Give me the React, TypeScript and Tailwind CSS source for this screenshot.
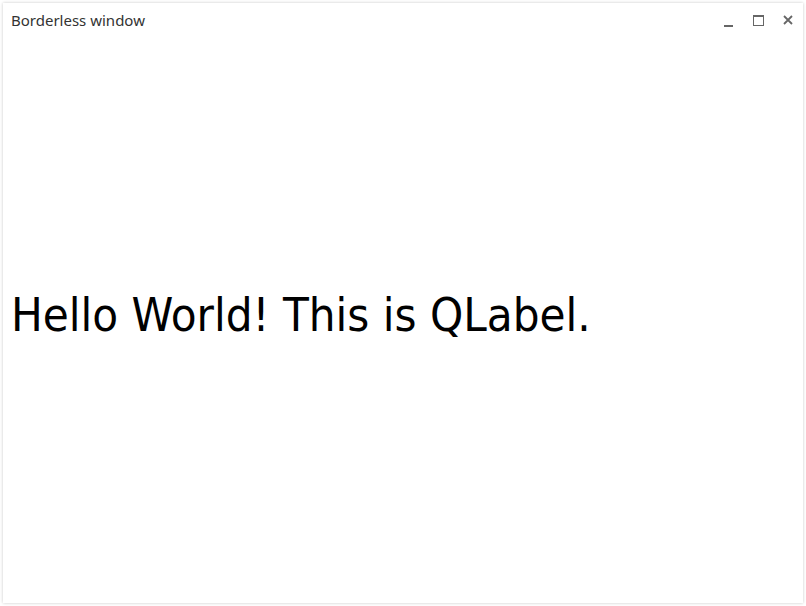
export default function App() {
  return (
    <div className="w-[806px] h-[606px] bg-white p-[3px]">
      <div className="flex h-full flex-col bg-white shadow-[0_0_3px_rgba(0,0,0,0.22)]">
        <div className="flex h-[34px] items-center justify-between pl-[8px] pr-[10px]">
          <span className="text-[15px] text-[#333333] font-['Noto_Sans',sans-serif]">
            Borderless window
          </span>
          <div className="flex items-center gap-[19px] text-[#666666]">
            <svg width="10" height="10" viewBox="0 0 10 10" className="mt-[6px] ml-[2px]">
              <rect x="0" y="7" width="9" height="2" fill="currentColor" />
            </svg>
            <svg width="11" height="11" viewBox="0 0 11 11">
              <rect x="0.5" y="0.5" width="10" height="10" fill="none" stroke="currentColor" />
              <rect x="0" y="0" width="11" height="2" fill="currentColor" />
            </svg>
            <svg width="10" height="10" viewBox="0 0 10 10">
              <path d="M1 1 L9 9 M9 1 L1 9" stroke="currentColor" strokeWidth="1.8" />
            </svg>
          </div>
        </div>
        <div className="flex flex-1 items-center pl-[8px] pb-[10px]">
          <span className="text-[47px] text-black font-['DejaVu_Sans_Condensed','DejaVu_Sans',sans-serif] [font-stretch:condensed]">
            Hello World! This is QLabel.
          </span>
        </div>
      </div>
    </div>
  );
}
